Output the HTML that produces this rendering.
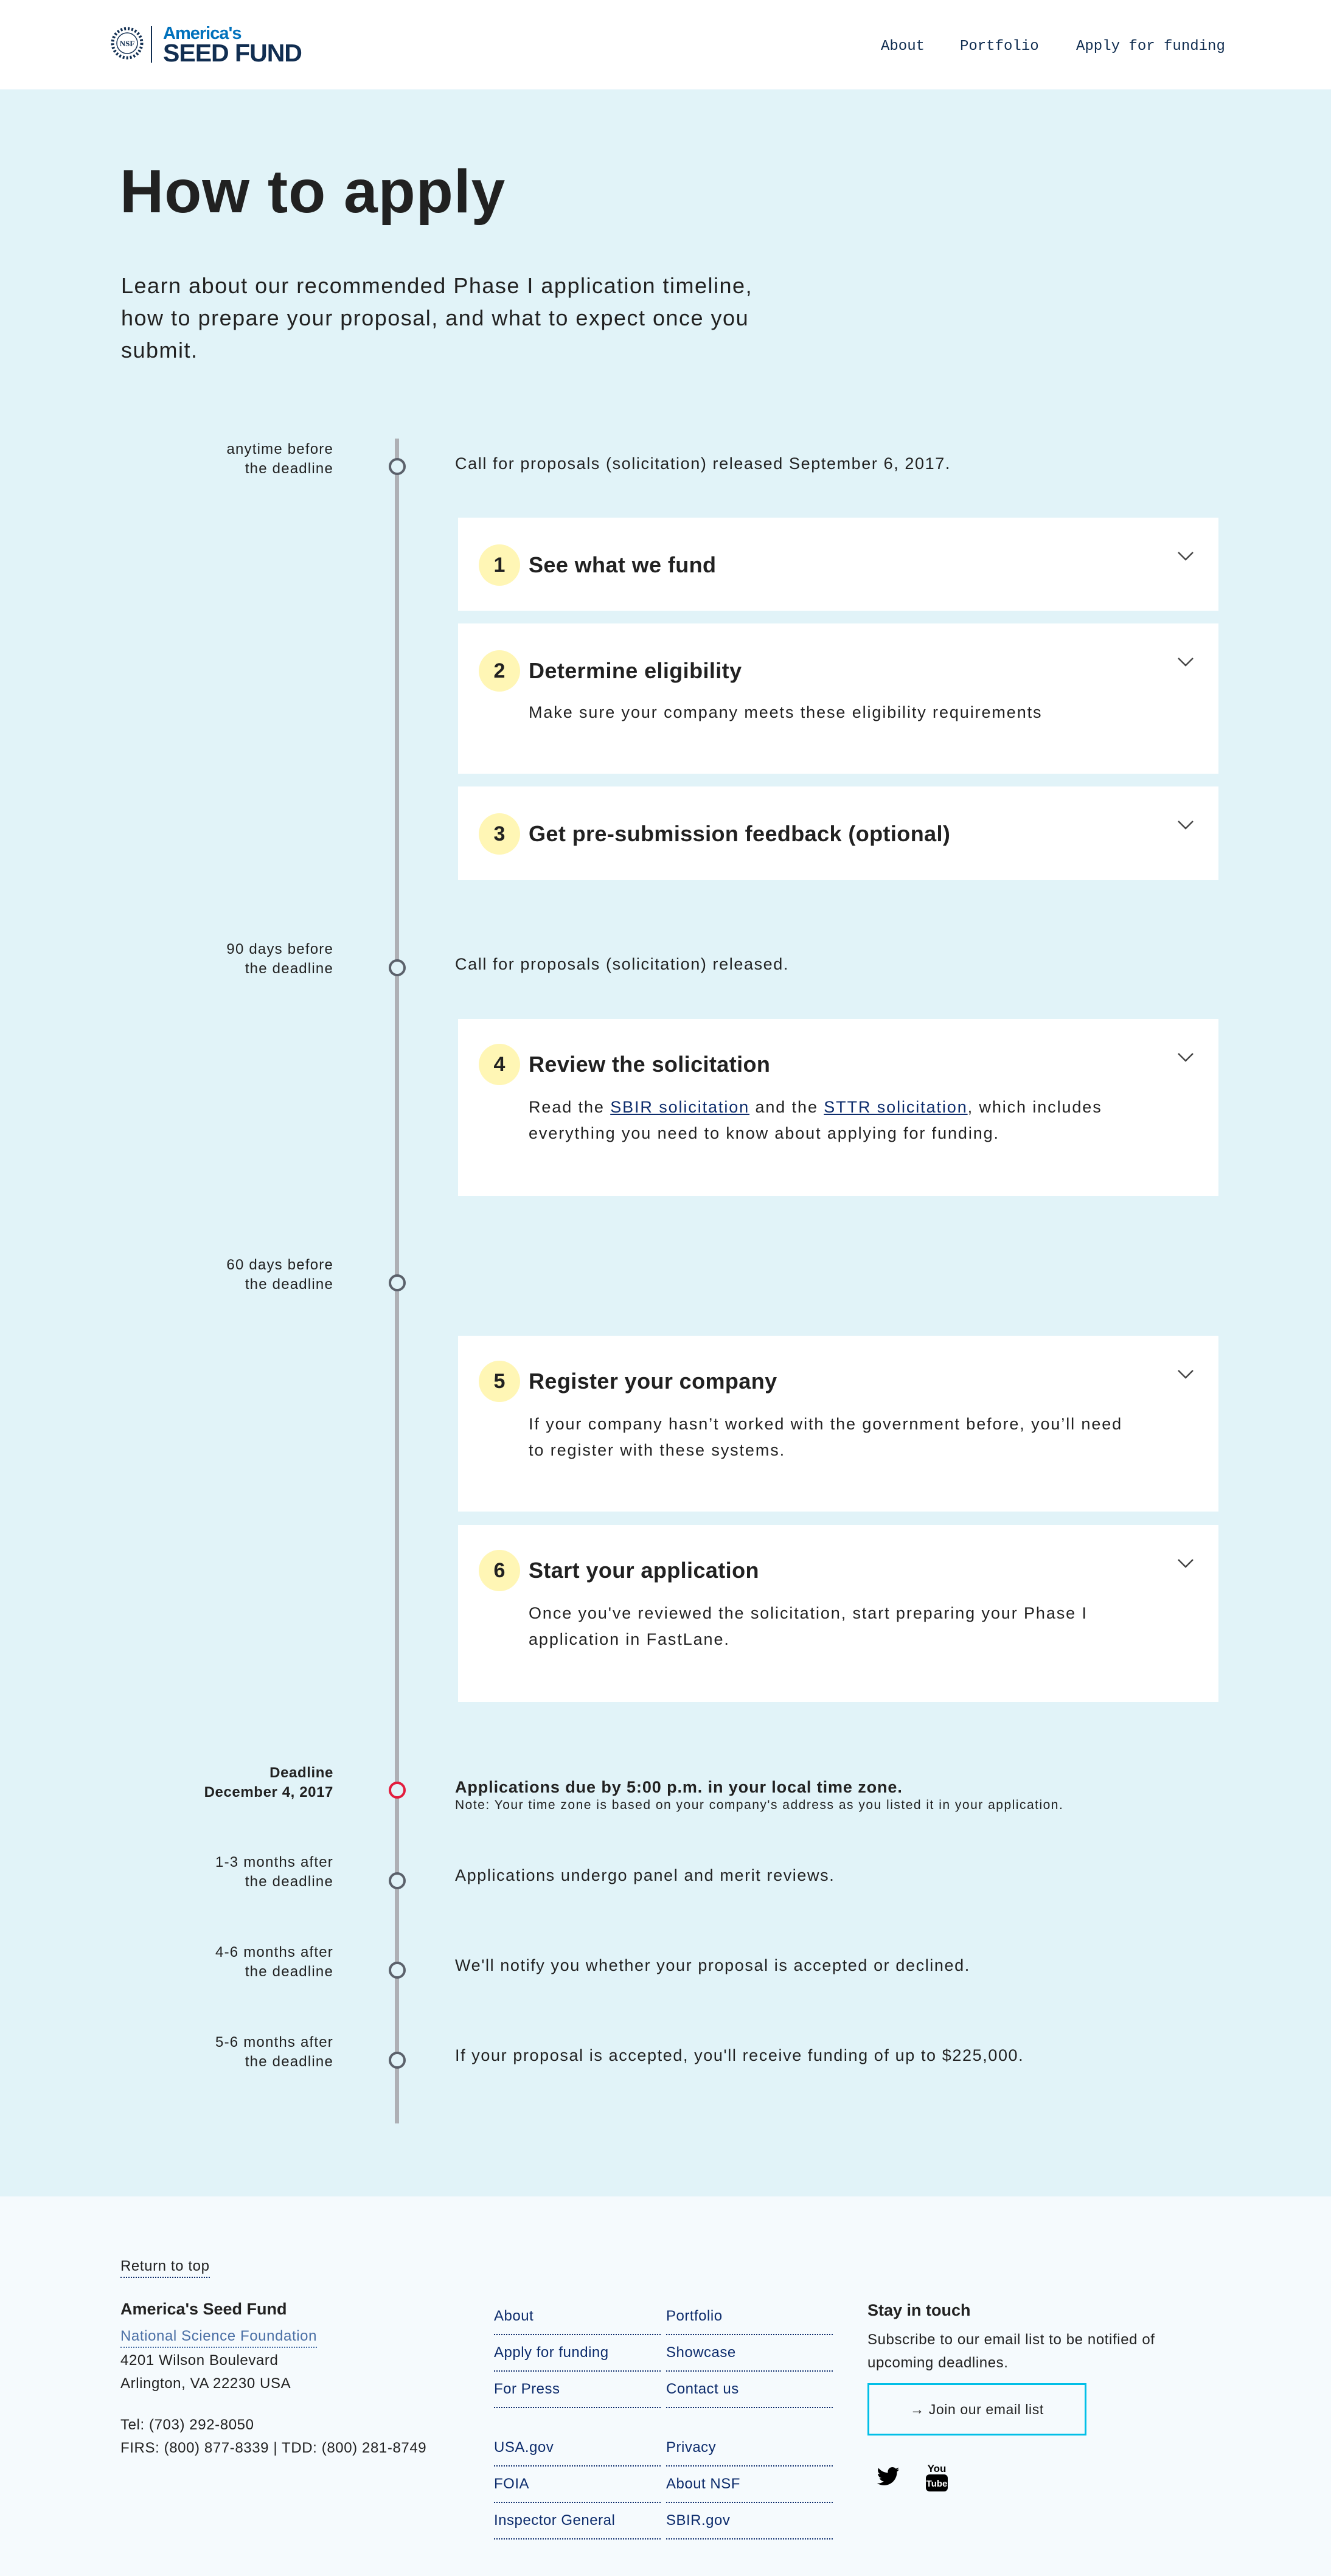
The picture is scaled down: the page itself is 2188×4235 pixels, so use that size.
<!DOCTYPE html>
<html><head><meta charset="utf-8">
<style>
*{margin:0;padding:0;box-sizing:border-box}
body{width:2188px;height:4235px;position:relative;background:#f5fafd;font-family:"Liberation Sans",sans-serif;color:#212121;overflow:hidden}
.a{position:absolute;white-space:nowrap}
header{position:absolute;left:0;top:0;width:2188px;height:147px;background:#fff}
.nav{font-family:"Liberation Mono",monospace;font-size:24px;color:#112e51;top:62px;line-height:30px}
.main{position:absolute;left:0;top:147px;width:2188px;height:3464px;background:#e1f3f8}
.lbl{font-size:24px;line-height:32px;text-align:right;right:1640px;color:#212121;letter-spacing:1.2px}
.ev{font-size:27px;line-height:36px;left:748px;letter-spacing:1.6px}
.dot{position:absolute;left:639px;width:28px;height:28px;border-radius:50%;border:4px solid #5b616b;background:#e1f3f8}
.card{position:absolute;left:753px;width:1250px;background:#fff}
.num{position:absolute;left:34px;width:68px;height:68px;border-radius:50%;background:#fff6b5;font-weight:bold;font-size:34px;line-height:68px;text-align:center}
.ttl{position:absolute;left:116px;font-weight:bold;font-size:36px;line-height:44px;white-space:nowrap;letter-spacing:0.4px}
.desc{position:absolute;left:116px;font-size:27px;line-height:43px;white-space:nowrap;color:#212121;letter-spacing:1.9px}
.chev{position:absolute;left:1181px}
.desc a{color:#0d2c6c;text-decoration:underline}
.fl{font-size:24px;line-height:38px;letter-spacing:0.6px}
.lk{position:absolute;width:274px;height:60px;border-bottom:2px dotted #0d2c6c;color:#0d2c6c;font-size:24px;line-height:34px;padding-top:12px;letter-spacing:0.5px}
</style></head><body>
<header>
<svg class="a" style="left:180px;top:42px" width="58" height="58" viewBox="0 0 58 58">
<circle cx="29" cy="29" r="24" fill="none" stroke="#112e51" stroke-width="5" stroke-dasharray="3 3"/>
<circle cx="29" cy="29" r="17" fill="#fff" stroke="#112e51" stroke-width="1.5"/>
<text x="29" y="34" font-family="Liberation Serif" font-size="13" font-weight="bold" text-anchor="middle" fill="#112e51">NSF</text>
</svg>
<div class="a" style="left:248px;top:43px;width:2px;height:60px;background:#112e51"></div>
<div class="a" style="left:268px;top:40px;font-size:29px;font-weight:bold;color:#0071bc;letter-spacing:-1px;line-height:30px">America's</div>
<div class="a" style="left:268px;top:68px;font-size:41px;font-weight:bold;color:#112e51;letter-spacing:-1px;line-height:38px">SEED FUND</div>
<div class="a nav" style="left:1448px">About</div>
<div class="a nav" style="left:1578px">Portfolio</div>
<div class="a nav" style="left:1769px">Apply for funding</div>
</header>
<div class="main"></div>
<div class="a" style="left:197px;top:260px;font-size:100px;font-weight:900;line-height:110px;letter-spacing:1px">How to apply</div>
<div class="a" style="left:199px;top:443px;font-size:36px;line-height:53px;letter-spacing:1.5px">Learn about our recommended Phase I application timeline,<br>how to prepare your proposal, and what to expect once you<br>submit.</div>

<div class="a" style="left:649px;top:721px;width:7px;height:2770px;background:#aeb0b5"></div>

<div class="a lbl" style="top:723px">anytime before<br>the deadline</div>
<div class="dot" style="top:753px"></div>
<div class="a ev" style="top:744px">Call for proposals (solicitation) released September 6, 2017.</div>

<div class="card" style="top:851px;height:153px"><div class="num" style="top:44px">1</div><div class="ttl" style="top:56px">See what we fund</div>
<svg class="chev" style="top:54px" width="30" height="18"><polyline points="3,3 15,15 27,3" fill="none" stroke="#444" stroke-width="2.5"/></svg></div>
<div class="card" style="top:1025px;height:247px"><div class="num" style="top:44px">2</div><div class="ttl" style="top:56px">Determine eligibility</div>
<div class="desc" style="top:125px">Make sure your company meets these eligibility requirements</div>
<svg class="chev" style="top:54px" width="30" height="18"><polyline points="3,3 15,15 27,3" fill="none" stroke="#444" stroke-width="2.5"/></svg></div>
<div class="card" style="top:1293px;height:154px"><div class="num" style="top:44px">3</div><div class="ttl" style="top:56px">Get pre-submission feedback (optional)</div>
<svg class="chev" style="top:54px" width="30" height="18"><polyline points="3,3 15,15 27,3" fill="none" stroke="#444" stroke-width="2.5"/></svg></div>

<div class="a lbl" style="top:1545px">90 days before<br>the deadline</div>
<div class="dot" style="top:1577px"></div>
<div class="a ev" style="top:1567px">Call for proposals (solicitation) released.</div>

<div class="card" style="top:1675px;height:291px"><div class="num" style="top:41px">4</div><div class="ttl" style="top:53px">Review the solicitation</div>
<div class="desc" style="top:124px">Read the <a>SBIR solicitation</a> and the <a>STTR solicitation</a>, which includes<br>everything you need to know about applying for funding.</div>
<svg class="chev" style="top:54px" width="30" height="18"><polyline points="3,3 15,15 27,3" fill="none" stroke="#444" stroke-width="2.5"/></svg></div>

<div class="a lbl" style="top:2064px">60 days before<br>the deadline</div>
<div class="dot" style="top:2095px"></div>

<div class="card" style="top:2196px;height:289px"><div class="num" style="top:41px">5</div><div class="ttl" style="top:53px">Register your company</div>
<div class="desc" style="top:124px">If your company hasn’t worked with the government before, you’ll need<br>to register with these systems.</div>
<svg class="chev" style="top:54px" width="30" height="18"><polyline points="3,3 15,15 27,3" fill="none" stroke="#444" stroke-width="2.5"/></svg></div>
<div class="card" style="top:2507px;height:291px"><div class="num" style="top:41px">6</div><div class="ttl" style="top:53px">Start your application</div>
<div class="desc" style="top:124px">Once you've reviewed the solicitation, start preparing your Phase I<br>application in FastLane.</div>
<svg class="chev" style="top:54px" width="30" height="18"><polyline points="3,3 15,15 27,3" fill="none" stroke="#444" stroke-width="2.5"/></svg></div>

<div class="a lbl" style="top:2899px;font-weight:bold;letter-spacing:0.6px">Deadline<br>December 4, 2017</div>
<div class="dot" style="top:2929px;border-color:#e31c3d"></div>
<div class="a ev" style="top:2920px;font-weight:bold;letter-spacing:0.9px">Applications due by 5:00 p.m. in your local time zone.</div>
<div class="a" style="left:748px;top:2955px;font-size:21px;line-height:26px;letter-spacing:1.5px">Note: Your time zone is based on your company's address as you listed it in your application.</div>

<div class="a lbl" style="top:3046px">1-3 months after<br>the deadline</div>
<div class="dot" style="top:3078px"></div>
<div class="a ev" style="top:3065px">Applications undergo panel and merit reviews.</div>
<div class="a lbl" style="top:3194px">4-6 months after<br>the deadline</div>
<div class="dot" style="top:3225px"></div>
<div class="a ev" style="top:3213px">We'll notify you whether your proposal is accepted or declined.</div>
<div class="a lbl" style="top:3342px">5-6 months after<br>the deadline</div>
<div class="dot" style="top:3373px"></div>
<div class="a ev" style="top:3361px">If your proposal is accepted, you'll receive funding of up to $225,000.</div>

<!-- footer -->
<div class="a fl" style="left:198px;top:3709px;border-bottom:2px dotted #0d2c6c;line-height:34px">Return to top</div>
<div class="a" style="left:198px;top:3779px;font-size:27px;font-weight:bold;line-height:34px">America's Seed Fund</div>
<div class="a fl" style="left:198px;top:3824px;color:#4a6fa5;border-bottom:2px dotted #4a6fa5;line-height:34px">National Science Foundation</div>
<div class="a fl" style="left:198px;top:3862px">4201 Wilson Boulevard<br>Arlington, VA 22230 USA</div>
<div class="a fl" style="left:198px;top:3968px">Tel: (703) 292-8050<br>FIRS: (800) 877-8339 | TDD: (800) 281-8749</div>

<div class="lk" style="left:812px;top:3779px">About</div><div class="lk" style="left:1095px;top:3779px">Portfolio</div>
<div class="lk" style="left:812px;top:3839px">Apply for funding</div><div class="lk" style="left:1095px;top:3839px">Showcase</div>
<div class="lk" style="left:812px;top:3899px">For Press</div><div class="lk" style="left:1095px;top:3899px">Contact us</div>
<div class="lk" style="left:812px;top:3995px">USA.gov</div><div class="lk" style="left:1095px;top:3995px">Privacy</div>
<div class="lk" style="left:812px;top:4055px">FOIA</div><div class="lk" style="left:1095px;top:4055px">About NSF</div>
<div class="lk" style="left:812px;top:4115px">Inspector General</div><div class="lk" style="left:1095px;top:4115px">SBIR.gov</div>

<div class="a" style="left:1426px;top:3781px;font-size:27px;font-weight:bold;line-height:34px">Stay in touch</div>
<div class="a fl" style="left:1426px;top:3828px">Subscribe to our email list to be notified of<br>upcoming deadlines.</div>
<div class="a" style="left:1426px;top:3918px;width:360px;height:86px;border:3px solid #02bfe7;font-size:23px;line-height:80px;text-align:center;letter-spacing:0.6px">→ Join our email list</div>
<svg class="a" style="left:1438px;top:4052px" width="44" height="40" viewBox="0 0 24 24"><path fill="#000" d="M23 4.6a9 9 0 0 1-2.6.7 4.5 4.5 0 0 0 2-2.5 9 9 0 0 1-2.9 1.1 4.5 4.5 0 0 0-7.7 4.1A12.8 12.8 0 0 1 2.5 3.3a4.5 4.5 0 0 0 1.4 6 4.5 4.5 0 0 1-2-.6 4.5 4.5 0 0 0 3.6 4.5 4.5 4.5 0 0 1-2 .1 4.5 4.5 0 0 0 4.2 3.1A9 9 0 0 1 1 18.3 12.8 12.8 0 0 0 7.9 20.3c8.3 0 12.8-6.9 12.8-12.8v-.6A9 9 0 0 0 23 4.6z"/></svg>
<svg class="a" style="left:1520px;top:4046px" width="40" height="52" viewBox="0 0 40 52">
<text x="20" y="18" font-family="Liberation Sans" font-weight="bold" font-size="17" text-anchor="middle" fill="#000">You</text>
<rect x="2" y="22" width="36" height="28" rx="6" fill="#000"/>
<text x="20" y="42" font-family="Liberation Sans" font-weight="bold" font-size="15" text-anchor="middle" fill="#fff">Tube</text>
</svg>
</body></html>
